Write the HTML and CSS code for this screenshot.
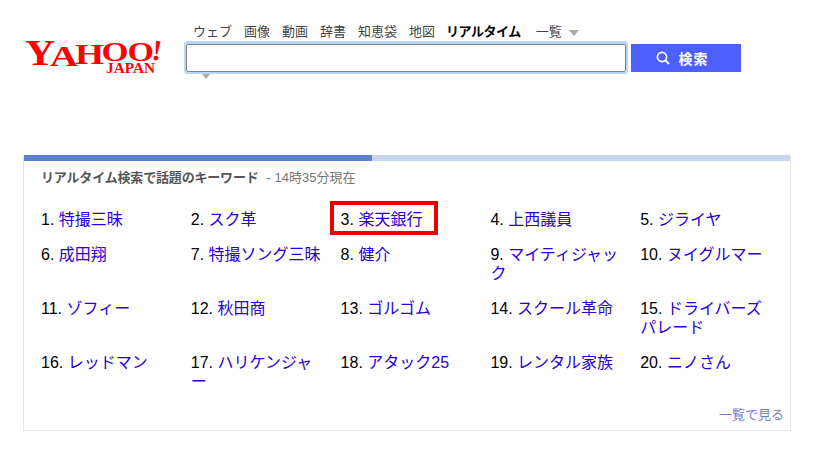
FILE: index.html
```html
<!DOCTYPE html>
<html lang="ja">
<head>
<meta charset="utf-8">
<title>Yahoo! Japan リアルタイム検索</title>
<link rel="stylesheet" href="styles.css">
</head>
<body>
<header class="header">
  <a class="logo" href="#" aria-label="Yahoo! Japan">
    <svg width="140" height="40" viewBox="0 0 140 40">
      <g class="logo-main">
        <text x="0" y="25" font-size="36" textLength="30" lengthAdjust="spacingAndGlyphs">Y</text>
        <text x="25" y="25.5" font-size="30" textLength="28" lengthAdjust="spacingAndGlyphs">A</text>
        <text x="50" y="23.5" font-size="30" textLength="29" lengthAdjust="spacingAndGlyphs">H</text>
        <text x="76.5" y="21" font-size="27" textLength="27" lengthAdjust="spacingAndGlyphs">O</text>
        <text x="102.5" y="21" font-size="27" textLength="26.5" lengthAdjust="spacingAndGlyphs">O</text>
        <text x="127" y="20" font-size="29" textLength="10" lengthAdjust="spacingAndGlyphs" transform="rotate(8 132 10)">!</text>
      </g>
      <text class="logo-sub" x="81" y="33" font-size="14" textLength="49" lengthAdjust="spacingAndGlyphs">JAPAN</text>
    </svg>
  </a>
  <div class="search">
    <nav class="tabs">
      <a href="#">ウェブ</a>
      <a href="#">画像</a>
      <a href="#">動画</a>
      <a href="#">辞書</a>
      <a href="#">知恵袋</a>
      <a href="#">地図</a>
      <a href="#" class="tab-active">リアルタイム</a>
      <a href="#" class="tab-more">一覧<i class="caret"></i></a>
    </nav>
    <form class="search-row">
      <div class="field">
        <input class="input" type="text" aria-label="検索">
        <i class="field-caret"></i>
      </div>
      <button class="button" type="button">
        <svg width="14" height="14" viewBox="0 0 14 14"><circle cx="6" cy="6" r="4.6" fill="none" stroke="#fff" stroke-width="1.7"/><path d="M9.4 9.4 13 13" stroke="#fff" stroke-width="1.9" fill="none"/></svg>
        <span>検索</span>
      </button>
    </form>
  </div>
</header>
<main class="panel">
  <div class="progress"><div class="progress-fill"></div></div>
  <div class="panel-body">
    <h2 class="title">リアルタイム検索で話題のキーワード<span class="title-time">- 14時35分現在</span></h2>
    <ol class="ranking">
      <li>1. <a href="#">特撮三昧</a></li>
      <li>2. <a href="#">スク革</a></li>
      <li class="marked">3. <a href="#">楽天銀行</a><i class="mark"></i></li>
      <li>4. <a href="#">上西議員</a></li>
      <li>5. <a href="#">ジライヤ</a></li>
      <li>6. <a href="#">成田翔</a></li>
      <li>7. <a href="#">特撮ソング三昧</a></li>
      <li>8. <a href="#">健介</a></li>
      <li>9. <a href="#">マイティジャック</a></li>
      <li>10. <a href="#">ヌイグルマー</a></li>
      <li>11. <a href="#">ゾフィー</a></li>
      <li>12. <a href="#">秋田商</a></li>
      <li>13. <a href="#">ゴルゴム</a></li>
      <li>14. <a href="#">スクール革命</a></li>
      <li>15. <a href="#">ドライバーズパレード</a></li>
      <li>16. <a href="#">レッドマン</a></li>
      <li>17. <a href="#">ハリケンジャ<br>ー</a></li>
      <li>18. <a href="#">アタック25</a></li>
      <li>19. <a href="#">レンタル家族</a></li>
      <li>20. <a href="#">ニノさん</a></li>
    </ol>
    <div class="more"><a href="#">一覧で見る</a></div>
  </div>
</main>
</body>
</html>
```
FILE: styles.css
```css
* { box-sizing: border-box; }
html, body { margin: 0; padding: 0; }
body {
  width: 816px;
  height: 450px;
  overflow: hidden;
  background: #fff;
  color: #000;
  font-family: "Liberation Sans", "Noto Sans CJK JP", sans-serif;
}
a { text-decoration: none; }

.header { display: flex; height: 155px; padding: 0 0 0 25px; }
.logo { display: block; width: 159px; height: 40px; margin-top: 40px; }
.logo svg { display: block; overflow: visible; }
.logo-main text { font-family: "Liberation Serif", serif; font-weight: 700; fill: #f00; }
.logo-sub { font-family: "Liberation Serif", serif; font-weight: 700; fill: #f00; }

.search { display: flex; flex-direction: column; width: 560px; }
.tabs { display: flex; gap: 12px; height: 41px; padding: 22px 0 0 9px; font-size: 13px; line-height: 19px; }
.tabs a { color: #444; white-space: nowrap; }
.tabs .tab-active { color: #000; font-weight: 700; letter-spacing: -0.5px; margin-left: -1px; }
.tabs .tab-more { margin-left: 3px; }
.caret {
  display: inline-block; width: 0; height: 0; margin-left: 7px; vertical-align: 0;
  border-left: 5px solid transparent; border-right: 5px solid transparent; border-top: 6px solid #aaa;
}
.search-row { display: flex; align-items: center; gap: 3px; height: 33px; }
.field { position: relative; width: 444px; height: 33px; }
.input {
  display: block; width: 100%; height: 100%; margin: 0; padding: 0 4px;
  border: 2px solid #b5d6f5; border-top-width: 3px; border-radius: 4px; outline: 0; background: #fff;
  box-shadow: inset 0 0 0 1px #808080;
}
.field-caret {
  position: absolute; left: 18px; top: 33px; width: 0; height: 0;
  border-left: 4px solid transparent; border-right: 4px solid transparent; border-top: 5px solid #aaa;
}
.button {
  display: flex; align-items: center; justify-content: center; gap: 9px;
  width: 110px; height: 28px; margin: 0; padding: 0 8px 0 0; border: 0;
  background: #4d5fff; color: #fff; font: 700 14px "Liberation Sans", "Noto Sans CJK JP", sans-serif;
  letter-spacing: 1px;
}

.panel { width: 768px; height: 276px; margin-left: 23px; border: 1px solid #e5e5e5; border-top: 0; }
.progress { height: 6px; background: #c9d5ee; }
.progress-fill { width: 348px; height: 6px; background: #5b80cc; }
.panel-body { padding: 0 6px 0 17px; }
.title { margin: 0; height: 31px; padding-top: 7px; font-size: 13px; line-height: 19px; font-weight: 700; color: #555; letter-spacing: -0.18px; }
.title-time { margin-left: 8px; font-weight: 400; color: #777; letter-spacing: 0; }
.ranking {
  display: grid; grid-template-columns: repeat(5, 149.8px); row-gap: 16px;
  list-style: none; margin: 18px 0 0; padding: 0; font-size: 16px; line-height: 19px;
}
.ranking li { position: relative; padding-right: 15px; }
.ranking a { color: #2a00d5; }
.mark { position: absolute; left: -11px; top: -9px; width: 108px; height: 34px; border: 4px solid #e60000; }
.more { margin-top: 15px; text-align: right; font-size: 13px; line-height: 18px; }
.more a { color: #7777cc; }
```
